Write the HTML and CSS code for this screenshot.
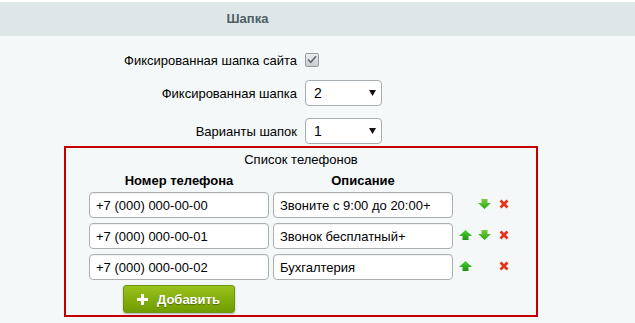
FILE: index.html
```html
<!DOCTYPE html>
<html lang="ru">
<head>
    <meta charset="UTF-8">
    <meta content="width=device-width, initial-scale=1.0" name="viewport">
    <link rel="stylesheet" href="styles.css">
    <title>Шапка</title>
</head>
<body>

<!-- Shared gradients for the arrow icons -->
<svg class="defs" width="0" height="0">
    <defs>
        <linearGradient id="gUp" x1="0" y1="0" x2="0" y2="1">
            <stop offset="0" stop-color="#4bd234"/>
            <stop offset="1" stop-color="#1e9412"/>
        </linearGradient>
        <linearGradient id="gDown" x1="0" y1="0" x2="0" y2="1">
            <stop offset="0" stop-color="#7ccc40"/>
            <stop offset="1" stop-color="#26a818"/>
        </linearGradient>
    </defs>
</svg>

<!-- Section title -->
<div class="section-head">Шапка</div>

<!-- Options -->
<div class="options">
    <div class="opt-row first">
        <label class="opt-label">Фиксированная шапка сайта</label>
        <span class="checkbox">
            <svg width="10" height="9" viewBox="0 0 10 9"><path d="M1 4.5 L3.8 7.3 L9 1.2" fill="none" stroke="#5d6a6f" stroke-width="1.6"/></svg>
        </span>
    </div>
    <div class="opt-row">
        <label class="opt-label">Фиксированная шапка</label>
        <div class="select"><span>2</span><svg width="7" height="6" viewBox="0 0 7 6"><path d="M0 0 H7 L3.5 6 Z" fill="#111"/></svg></div>
    </div>
    <div class="opt-row">
        <label class="opt-label">Варианты шапок</label>
        <div class="select"><span>1</span><svg width="7" height="6" viewBox="0 0 7 6"><path d="M0 0 H7 L3.5 6 Z" fill="#111"/></svg></div>
    </div>
</div>

<!-- Phones list -->
<div class="phones">
    <div class="phones-caption">Список телефонов</div>
    <div class="phones-grid">
        <div class="col-head">Номер телефона</div>
        <div class="col-head">Описание</div>
        <div></div>

        <input class="field" type="text" value="+7 (000) 000-00-00">
        <input class="field" type="text" value="Звоните с 9:00 до 20:00+">
        <div class="actions">
            <span class="slot"></span>
            <span class="slot"><svg width="13" height="10" viewBox="0 0 13 10"><path d="M6.5 10 L13 4 L9.5 4 L9.5 0 L3.5 0 L3.5 4 L0 4 Z" fill="url(#gDown)"/></svg></span>
            <span class="slot"><svg width="10" height="10" viewBox="0 0 10 10"><path d="M1.5 1.5 L8.5 8.5 M8.5 1.5 L1.5 8.5" class="cross"/></svg></span>
        </div>

        <input class="field" type="text" value="+7 (000) 000-00-01">
        <input class="field" type="text" value="Звонок бесплатный+">
        <div class="actions">
            <span class="slot"><svg width="13" height="10" viewBox="0 0 13 10"><path d="M6.5 0 L13 6 L9.5 6 L9.5 10 L3.5 10 L3.5 6 L0 6 Z" fill="url(#gUp)"/></svg></span>
            <span class="slot"><svg width="13" height="10" viewBox="0 0 13 10"><path d="M6.5 10 L13 4 L9.5 4 L9.5 0 L3.5 0 L3.5 4 L0 4 Z" fill="url(#gDown)"/></svg></span>
            <span class="slot"><svg width="10" height="10" viewBox="0 0 10 10"><path d="M1.5 1.5 L8.5 8.5 M8.5 1.5 L1.5 8.5" class="cross"/></svg></span>
        </div>

        <input class="field" type="text" value="+7 (000) 000-00-02">
        <input class="field" type="text" value="Бухгалтерия">
        <div class="actions">
            <span class="slot"><svg width="13" height="10" viewBox="0 0 13 10"><path d="M6.5 0 L13 6 L9.5 6 L9.5 10 L3.5 10 L3.5 6 L0 6 Z" fill="url(#gUp)"/></svg></span>
            <span class="slot"></span>
            <span class="slot"><svg width="10" height="10" viewBox="0 0 10 10"><path d="M1.5 1.5 L8.5 8.5 M8.5 1.5 L1.5 8.5" class="cross"/></svg></span>
        </div>

        <button class="add-btn" type="button">
            <svg width="11" height="11" viewBox="0 0 11 11"><path d="M4 0 H7 V4 H11 V7 H7 V11 H4 V7 H0 V4 H4 Z" fill="#fff"/></svg>
            Добавить
        </button>
    </div>
</div>

</body>
</html>
```

FILE: styles.css
```css
body {
    margin: 0;
    border-top: 2px solid #ffffff;
    background-color: #f4f8f8;
    font-family: "Liberation Sans", Arial, sans-serif;
    font-size: 13px;
    color: #000;
}

.defs {
    display: block;
    height: 0;
}

/* Section title bar */
.section-head {
    height: 34px;
    line-height: 34px;
    padding-right: 140px;
    text-align: center;
    background-color: #dfe6e8;
    color: #4c6065;
    font-weight: bold;
}

/* Label / control rows */
.options {
    padding-top: 11px;
}

.opt-row {
    display: flex;
    align-items: center;
    height: 26px;
    margin-bottom: 12px;
}

.opt-row.first {
    margin-bottom: 7px;
}

.opt-label {
    width: 297px;
    text-align: right;
    margin-right: 8px;
}

.checkbox {
    display: flex;
    align-items: center;
    justify-content: center;
    box-sizing: border-box;
    width: 14px;
    height: 14px;
    margin-top: -1px;
    border: 1px solid #959da1;
    border-radius: 2px;
    background: linear-gradient(#eceeef, #c9cdcf);
}

.select {
    display: flex;
    align-items: center;
    justify-content: space-between;
    box-sizing: border-box;
    width: 77px;
    height: 26px;
    padding: 0 5px 0 8px;
    border: 1px solid #a6adb2;
    border-radius: 4px;
    background-color: #fff;
    font-size: 14px;
}

/* Phones box */
.phones {
    box-sizing: border-box;
    width: 474px;
    margin: -10px 0 0 64px;
    padding: 4px 0 2px 23px;
    border: 2px solid #c20000;
}

.phones-caption {
    line-height: 16px;
    text-align: center;
    margin-left: -23px;
}

.phones-grid {
    display: grid;
    grid-template-columns: 180px 180px auto;
    column-gap: 4px;
    row-gap: 5px;
    margin-top: 5px;
}

.col-head {
    line-height: 16px;
    text-align: center;
    font-weight: bold;
    margin-bottom: -2px;
}

.field {
    box-sizing: border-box;
    height: 26px;
    margin: 0;
    padding: 0 6px;
    border: 1px solid #a9aeb3;
    border-radius: 4px;
    background-color: #fff;
    box-shadow: inset 0 1px 1px rgba(0, 0, 0, 0.06);
    font-family: inherit;
    font-size: 13px;
    color: #000;
}

.actions {
    display: flex;
    align-items: center;
    gap: 6px;
    padding-left: 2px;
    margin-top: -3px;
}

.slot {
    display: flex;
    justify-content: center;
    width: 13px;
}

.cross {
    stroke: #e2361c;
    stroke-width: 2.8;
}

.add-btn {
    grid-column: 1;
    justify-self: center;
    display: flex;
    align-items: center;
    gap: 9px;
    width: 112px;
    height: 28px;
    padding: 0 0 0 13px;
    border: 1px solid #6f9410;
    border-radius: 3px;
    background: linear-gradient(#9ac21c, #6f9c00);
    box-shadow: 0 1px 2px rgba(0, 0, 0, 0.3);
    color: #fff;
    font-family: inherit;
    font-size: 13px;
    font-weight: bold;
    text-shadow: 0 1px 1px rgba(0, 0, 0, 0.35);
}
```
